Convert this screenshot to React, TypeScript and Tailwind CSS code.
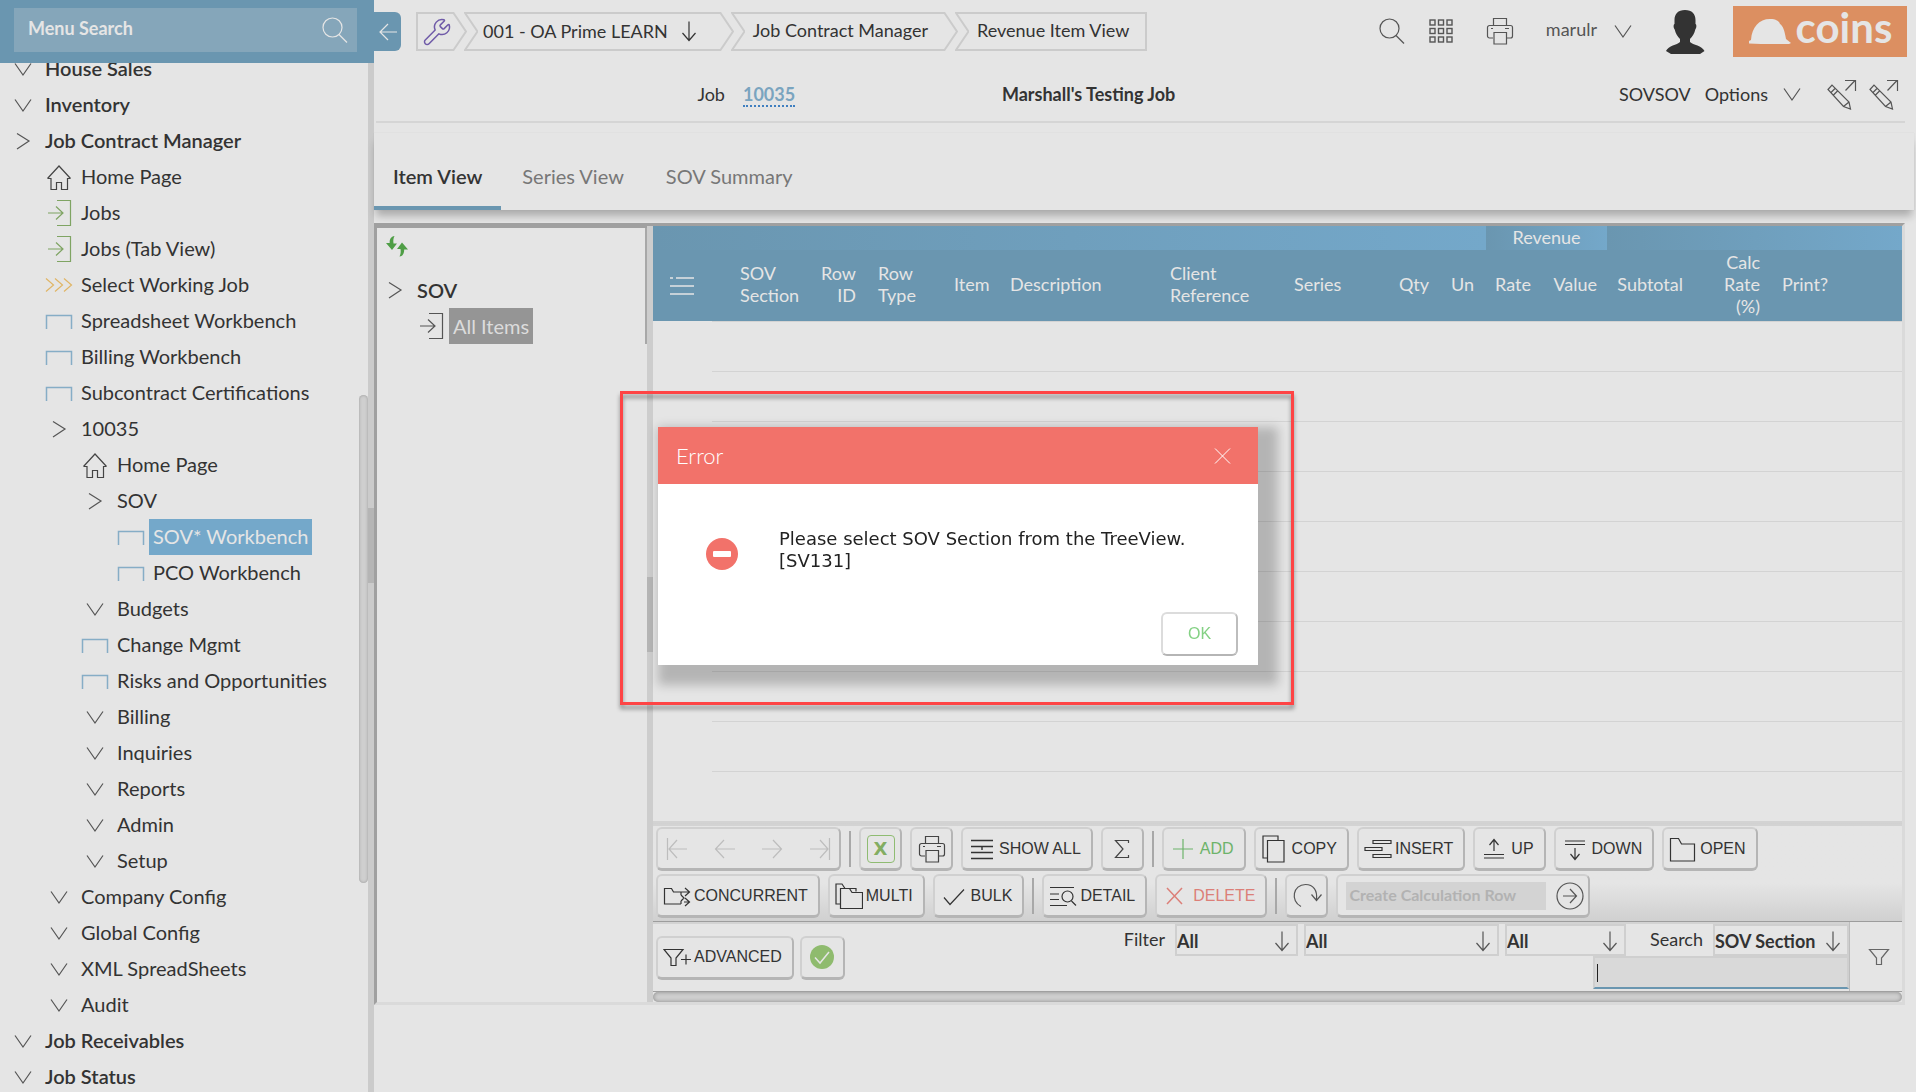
import type { ReactNode } from "react";
import { Wrench } from "lucide-react";

type IconProps = { children: ReactNode; size?: number; className?: string };

function Icon({ children, size = 28, className = "" }: IconProps) {
  return (
    <svg
      width={size}
      height={size}
      viewBox={`0 0 ${size} ${size}`}
      fill="none"
      stroke="currentColor"
      strokeWidth="1.2"
      aria-hidden="true"
      className={`shrink-0 ${className}`}
    >
      {children}
    </svg>
  );
}

const ChevronDown = () => <Icon><path d="M6 8.500l8 11.500 8-11.500" /></Icon>;
const ChevronRight = () => <Icon><path d="M8 6.500l12 7.500-12 8" /></Icon>;
const House = () => (
  <Icon>
    <path d="M2.500 15.500L14 3l11.500 12.500M2.500 15.500h3.500v11h5.500v-7h5v7h6v-11h3" />
  </Icon>
);
const Enter = () => (
  <Icon><path d="M12 1.500h13.500v25H12M3 14h14.500M11 7.500l7 6.500-7 6.500" /></Icon>
);
const TripleChevron = () => (
  <Icon><path d="M1 7.500l7.500 6.500L1 20.500M10 7.500l7.500 6.500-7.500 6.500M19 7.500l7.500 6.500-7.500 6.500" /></Icon>
);
const Frame = () => (
  <Icon><path d="M1.500 22V8.500h25V22" strokeWidth="1.5" /></Icon>
);
const ArrowDown = () => (
  <Icon size={22}><path d="M11 1.500v19M4.500 13l6.500 7.500 6.500-7.500" /></Icon>
);
const Magnifier = () => (
  <Icon><circle cx="11.500" cy="11.500" r="9.500" /><path d="M18 18.500l8 8" /></Icon>
);
const Printer = () => (
  <Icon>
    <path d="M7.500 8V1.500h13V8M7 21H3.500a2 2 0 0 1-2-2v-8.500a2 2 0 0 1 2-2h21a2 2 0 0 1 2 2V19a2 2 0 0 1-2 2H21M8 15.500h12.500v11.500H8zM5 11.500h2M19 11.500h4" />
  </Icon>
);
const EditPencil = () => (
  <Icon size={32}>
    <path d="M2 10.500l4-4.500 17 17 1.500 7-7-2.500zM5 13.500L9.500 9M7.500 16l4.500-4.500M17.500 27.500l5.500-4.500M19.500 11.500l9.500-10M19 1.500h10.500V12" />
  </Icon>
);
const Funnel = () => (
  <Icon><path d="M4.500 6.500h19L16.500 15v6.500h-5V15z" /></Icon>
);

const treeIcons = {
  open: { icon: <ChevronRight />, tone: "text-[#555]" },
  closed: { icon: <ChevronDown />, tone: "text-[#555]" },
  home: { icon: <House />, tone: "text-[#444]" },
  enter: { icon: <Enter />, tone: "text-[#7fa463]" },
  steps: { icon: <TripleChevron />, tone: "text-[#e0b565]" },
  frame: { icon: <Frame />, tone: "text-[#86adc6]" },
};

type TreeItem = [level: number, icon: keyof typeof treeIcons, label: string];

const menu: TreeItem[] = [
  [0, "closed", "House Sales"],
  [0, "closed", "Inventory"],
  [0, "open", "Job Contract Manager"],
  [1, "home", "Home Page"],
  [1, "enter", "Jobs"],
  [1, "enter", "Jobs (Tab View)"],
  [1, "steps", "Select Working Job"],
  [1, "frame", "Spreadsheet Workbench"],
  [1, "frame", "Billing Workbench"],
  [1, "frame", "Subcontract Certifications"],
  [1, "open", "10035"],
  [2, "home", "Home Page"],
  [2, "open", "SOV"],
  [3, "frame", "SOV* Workbench"],
  [3, "frame", "PCO Workbench"],
  [2, "closed", "Budgets"],
  [2, "frame", "Change Mgmt"],
  [2, "frame", "Risks and Opportunities"],
  [2, "closed", "Billing"],
  [2, "closed", "Inquiries"],
  [2, "closed", "Reports"],
  [2, "closed", "Admin"],
  [2, "closed", "Setup"],
  [1, "closed", "Company Config"],
  [1, "closed", "Global Config"],
  [1, "closed", "XML SpreadSheets"],
  [1, "closed", "Audit"],
  [0, "closed", "Job Receivables"],
  [0, "closed", "Job Status"],
];

const indents = ["pl-[5px]", "pl-[41px]", "pl-[77px]", "pl-[113px]"];

function Sidebar() {
  return (
    <aside className="flex h-full w-[374px] shrink-0 flex-col">
      <div className="h-[63px] shrink-0 bg-[#6a96b0] pt-2 pr-[17px] pl-3.5">
        <div className="flex h-11 items-center bg-[#85a6ba] pr-2 pl-3.5">
          <input
            type="text"
            aria-label="Menu Search"
            placeholder="Menu Search"
            className="h-9 min-w-0 flex-1 bg-transparent pb-1 text-lg font-bold text-[#e5e5e5] outline-none placeholder:text-[#e5e5e5]"
          />
          <span className="text-[#e5e5e5]"><Magnifier /></span>
        </div>
      </div>
      <div className="flex min-h-0 flex-1">
        <div className="relative min-w-0 flex-1 overflow-hidden">
          <nav className="-mt-3">
            <ul>
              {menu.map(([level, icon, label], i) => (
                <li key={i} className={indents[level]}>
                  <a href="#" className="flex h-9 items-center whitespace-nowrap">
                    <span className={`flex w-9 shrink-0 justify-center ${treeIcons[icon].tone}`}>
                      {treeIcons[icon].icon}
                    </span>
                    <span
                      className={`flex h-9 items-center pr-1 pb-0.5 pl-1 text-xl leading-6 ${
                        label === "SOV* Workbench" ? "bg-[#74a8ca] text-[#e5e5e5]" : ""
                      } ${level === 0 ? "font-semibold" : ""}`}
                    >
                      {label}
                    </span>
                  </a>
                </li>
              ))}
            </ul>
          </nav>
          <div className="absolute top-[332px] right-0 h-[488px] w-[9px] rounded-full bg-[#cfcfcf] shadow-[inset_0_0_3px_#999]" />
        </div>
        <div className="flex w-1.5 items-center bg-[#cbcbcb] pb-16">
          <div className="h-[75px] w-1.5 bg-[#b5b5b5]" />
        </div>
      </div>
    </aside>
  );
}

function CrumbTip() {
  return (
    <svg width="14" height="39" viewBox="0 0 14 39" fill="none" stroke="#cbcbcb" strokeWidth="2" aria-hidden="true" className="shrink-0">
      <path d="M0 1h0.500L13 19.500 0.500 38H0" />
    </svg>
  );
}

function CrumbNotch() {
  return (
    <svg width="14" height="39" viewBox="0 0 14 39" fill="none" stroke="#cbcbcb" strokeWidth="2" aria-hidden="true" className="-ml-[3px] shrink-0">
      <path d="M14 1H1l12.500 18.500L1 38h13" />
    </svg>
  );
}

function Breadcrumbs() {
  return (
    <nav aria-label="Breadcrumb" className="ml-[15px] flex h-[39px] shrink-0 text-lg whitespace-nowrap">
      <a href="#" aria-label="Tools" className="flex items-center border-y-2 border-l-2 border-[#cbcbcb] pr-px pl-1 text-[#6f5aa8]">
        <Wrench size={30} strokeWidth={1.2} />
      </a>
      <CrumbTip />
      <CrumbNotch />
      <button type="button" className="flex items-center gap-2.5 border-y-2 border-[#cbcbcb] pr-5 pb-0.5 pl-[5px]">
        001 - OA Prime LEARN <ArrowDown />
      </button>
      <CrumbTip />
      <CrumbNotch />
      <a href="#" className="flex items-center border-y-2 border-[#cbcbcb] pr-4 pb-1 pl-2">Job Contract Manager</a>
      <CrumbTip />
      <CrumbNotch />
      <a href="#" className="flex items-center border-y-2 border-r-2 border-[#cbcbcb] pr-4 pb-1 pl-2">Revenue Item View</a>
    </nav>
  );
}

function TopBar() {
  return (
    <header className="flex h-[63px] items-center">
      <button type="button" aria-label="Collapse menu" className="flex h-[39px] w-[27px] shrink-0 items-center justify-center rounded-r-md bg-[#6a96b0] text-[#e5e5e5]">
        <Icon size={22}><path d="M20 11H3M11 3l-8 8 8 8" /></Icon>
      </button>
      <Breadcrumbs />
      <div className="ml-auto flex shrink-0 items-center pr-[9px] text-[#555]">
        <div className="flex items-center pb-0.5">
          <button type="button" aria-label="Search"><Magnifier /></button>
          <button type="button" aria-label="Applications" className="ml-[21px]">
            <Icon>
              {[3, 11.500, 20].map((y) =>
                [3, 11.500, 20].map((x) => <rect key={`${x}-${y}`} x={x} y={y} width="5" height="5" strokeWidth="1.4" />)
              )}
            </Icon>
          </button>
          <button type="button" aria-label="Print" className="ml-[31px]"><Printer /></button>
          <button type="button" className="ml-8 flex items-center gap-3 text-lg">
            <span className="pb-1">marulr</span> <ChevronDown />
          </button>
        </div>
        <svg width="40" height="46" viewBox="0 0 40 46" fill="#333" aria-label="User" className="ml-7 shrink-0">
          <path d="M20 1c7 0 10.500 4 10.500 10v4c1.200.500 1.200 4-.200 5.500-.800 4-2.800 7-5.300 9.500v3c3 3 12 3.500 14.500 9L35 45H6L1 42c2.500-5.500 11-6 14-9v-3c-2.500-2.500-4.500-5.500-5.300-9.500-1.400-1.500-1.400-5-.200-5.500v-4C9.500 5 13 1 20 1z" />
        </svg>
        <div className="ml-7 flex h-[51px] w-[174px] items-center justify-center gap-1 bg-[#dc8f61] text-[#e5e5e5]">
          <svg width="44" height="27" viewBox="0 0 44 27" fill="currentColor" aria-hidden="true">
            <path d="M1 25.500V23l2-1C4 9 11 1 22 1c6 0 9 2 10 5 3 2 4.500 6 6 15l5 4-2 1H13z" />
          </svg>
          <span className="pb-2.5 text-[42px] leading-none font-bold">coins</span>
        </div>
      </div>
    </header>
  );
}

function JobBar() {
  return (
    <div className="mr-[11px] ml-0.5 border-b-2 border-[#d5d5d5]">
      <div className="grid h-[58px] grid-cols-[24%_259px_1fr_auto] items-center pt-1 text-lg">
        <span className="pr-[18px] text-right">Job</span>
        <span>
          <a href="#" className="border-b-2 border-dotted border-[#3f7fc0] font-bold text-[#7aa4bf]">10035</a>
        </span>
        <span className="font-bold">Marshall's Testing Job</span>
        <div className="flex items-center pr-[5px]">
          <span>SOVSOV</span>
          <button type="button" className="ml-3.5 flex items-center gap-2.5">
            Options <span className="text-[#555]"><ChevronDown /></span>
          </button>
          <button type="button" aria-label="Edit page" className="ml-5 pt-0.5 text-[#555]"><EditPencil /></button>
          <button type="button" aria-label="Edit layout" className="ml-2.5 pt-0.5 text-[#555]"><EditPencil /></button>
        </div>
      </div>
    </div>
  );
}

function Tabs() {
  return (
    <div role="tablist" className="mt-2.5 mr-0.5 flex h-[77px] text-xl text-[#777] shadow-[0_8px_8px_-2px_rgba(0,0,0,0.25),0_0_1px_rgba(0,0,0,0.1)]">
      <button type="button" role="tab" aria-selected="true" className="border-b-4 border-[#6a96b0] px-[19px] pt-3 font-semibold text-[#333]">
        Item View
      </button>
      <button type="button" role="tab" aria-selected="false" className="px-[21px] pt-2">Series View</button>
      <button type="button" role="tab" aria-selected="false" className="px-[21px] pt-2">SOV Summary</button>
    </div>
  );
}

function SectionTree() {
  return (
    <section className="w-[270px] shrink-0 border-t-2 border-[#a0a0a0]">
      <div className="h-[116px] border-r-2 border-[#a8a8a8]">
        <div className="h-11 pt-1.5 pl-2">
          <button type="button" aria-label="Refresh">
            <svg width="24" height="24" viewBox="0 0 24 24" fill="#4f9e46" aria-hidden="true">
              <path d="M9.500 2C6 2.500 4.500 5 4.700 9H1l6 7 5-6.500H8.500C8 6 8.500 4 9.500 2z" />
              <path d="M14.500 22.500c3.500-.500 4.700-3 4.700-7H23l-6-7-5 6.500h3.500c.500 3.500 0 5.500-1 7.500z" />
            </svg>
          </button>
        </div>
        <button type="button" className="flex h-9 items-center text-xl font-semibold">
          <span className="flex w-9 justify-center text-[#555]"><ChevronRight /></span>
          <span className="pl-1">SOV</span>
        </button>
        <a href="#" className="flex h-9 items-center pl-9 text-xl">
          <span className="flex w-9 justify-center text-[#555]"><Enter /></span>
          <span className="flex h-9 items-center bg-[#959595] px-1 text-[#dcdcdc]">All Items</span>
        </a>
      </div>
    </section>
  );
}

const columns = [
  { label: "SOV Section", col: "w-24", cell: "pl-7" },
  { label: "Row ID", col: "w-[60px]", cell: "pr-3 pl-3 text-right" },
  { label: "Row Type", col: "w-[76px]", cell: "pr-2.5 pl-2.5" },
  { label: "Item", col: "w-14", cell: "pl-2.5" },
  { label: "Description", col: "w-40", cell: "pl-2.5" },
  { label: "Client Reference", col: "w-[124px]", cell: "pr-2.5 pl-2.5" },
  { label: "Series", col: "w-[107px]", cell: "pl-2.5" },
  { label: "Qty", col: "w-[50px]", cell: "pr-3 text-right" },
  { label: "Un", col: "w-[45px]", cell: "pl-2.5" },
  { label: "Rate", col: "w-[55px]", cell: "pr-2.5 text-right" },
  { label: "Value", col: "w-[66px]", cell: "pr-2.5 text-right" },
  { label: "Subtotal", col: "w-[86px]", cell: "pr-2.5 text-right" },
  { label: "Calc Rate (%)", col: "w-[77px]", cell: "pr-2.5 pl-2.5 text-right" },
  { label: "Print?", col: "", cell: "pl-3" },
];

function ItemGrid() {
  const band = "h-6 bg-linear-to-r from-[#6a96b0] to-[#74a8ca] pb-0.5 font-normal";
  return (
    <table className="w-full table-fixed border-separate border-spacing-0 text-lg leading-[22px]">
      <colgroup>
        <col className="w-[59px]" />
        {columns.map((c) => <col key={c.label} className={c.col} />)}
      </colgroup>
      <thead className="text-[#e5e5e5]">
        <tr>
          <th colSpan={10} className={band} />
          <th colSpan={2} className={band}>Revenue</th>
          <th colSpan={3} className={band} />
        </tr>
        <tr className="bg-[#6a96b0]">
          <th className="h-[71px] pl-4">
            <button type="button" aria-label="Choose columns" className="block">
              <Icon><path d="M1 6h3M7 6h18M1 14h24M1 22h24" strokeWidth="1.5" /></Icon>
            </button>
          </th>
          {columns.map((c) => (
            <th key={c.label} scope="col" className={`pb-1 text-left align-middle font-normal ${c.cell}`}>{c.label}</th>
          ))}
        </tr>
      </thead>
      <tbody>
        {Array.from({ length: 10 }, (_, i) => (
          <tr key={i}>
            <td className="h-[50px]" />
            <td colSpan={14} className="border-t border-[#d3d3d3]" />
          </tr>
        ))}
      </tbody>
    </table>
  );
}

const raised =
  "flex h-11 shrink-0 items-center rounded-md border-2 border-[#d0d0d0] border-r-[#b5b5b5] border-b-[3px] border-b-[#b5b5b5] bg-[#e5e5e5]";

function ToolButton({ icon, label, tone = "text-[#333]" }: { icon: ReactNode; label: string; tone?: string }) {
  return (
    <button type="button" className={`${raised} gap-[3px] pr-2.5 pl-[5px] font-['Liberation_Sans',sans-serif] text-base whitespace-nowrap ${tone}`}>
      {icon}
      {label}
    </button>
  );
}

function IconButton({ icon, label }: { icon: ReactNode; label: string }) {
  return (
    <button type="button" aria-label={label} className={`${raised} w-[43px] justify-center text-[#444]`}>
      {icon}
    </button>
  );
}

const Divider = () => <span className="h-9 w-0.5 bg-[#a8a8a8]" />;

function Toolbar() {
  return (
    <div className="flex flex-col gap-[3px] border-t-[5px] border-b border-t-[#d3d3d3] border-b-[#9d9d9d] bg-linear-to-b from-[#e5e5e5] from-60% to-[#d0d0d0] pt-px pb-[3px] pl-[3px] [border-top-style:double]">
      <div className="flex items-center gap-2">
        <div className={`${raised} w-[185px] justify-between px-2 text-[#bdbdbd]`}>
          <button type="button" aria-label="First"><Icon size={22}><path d="M1.500 0v22M21 11H3M11 2l-8 9 8 9" /></Icon></button>
          <button type="button" aria-label="Previous"><Icon size={22}><path d="M21 11H1M10 2l-8.500 9 8.500 9" /></Icon></button>
          <button type="button" aria-label="Next"><Icon size={22}><path d="M1 11h20M12 2l8.500 9-8.500 9" /></Icon></button>
          <button type="button" aria-label="Last"><Icon size={22}><path d="M20.500 0v22M1 11h18M11 2l8 9-8 9" /></Icon></button>
        </div>
        <Divider />
        <IconButton
          label="Export to Excel"
          icon={
            <span className="flex size-7 items-center justify-center rounded-sm border border-[#8fbc72] font-['DejaVu_Sans',sans-serif] text-lg leading-none font-bold text-[#83ad62]">X</span>
          }
        />
        <IconButton label="Print" icon={<Printer />} />
        <ToolButton label="SHOW ALL" icon={<Icon><path d="M3 5.500h22M3 11.500h22M3 17.500h22M3 23.500h22M14 11v4" strokeWidth="1.4" /></Icon>} />
        <IconButton label="Totals" icon={<Icon size={22}><path d="M17.500 5V2.500h-13l7.500 8.500-7.500 8.500h13V17" /></Icon>} />
        <Divider />
        <ToolButton label="ADD" tone="text-[#6db36a]" icon={<Icon><path d="M14 4v20M4 14h20" /></Icon>} />
        <ToolButton label="COPY" icon={<Icon><path d="M6.500 23H2V1h15v4M6.500 5.500H23V27H6.500z" /></Icon>} />
        <ToolButton label="INSERT" icon={<Icon><path d="M9 5.500h18v3H9zM1 12.500h17v3H1zM9 19.500h18v3H9z" /></Icon>} />
        <ToolButton label="UP" icon={<Icon><path d="M14 16V5M9.500 10L14 4.500l4.500 5.500M4 19.500h20M4 23h20" /></Icon>} />
        <ToolButton label="DOWN" icon={<Icon><path d="M14 13v11M9.500 19l4.500 5.500 4.500-5.500M4 6h20M4 9.500h20" /></Icon>} />
        <ToolButton label="OPEN" icon={<Icon><path d="M1.500 26V3.500h8l3 5.500h13V26z" /></Icon>} />
      </div>
      <div className="flex items-center gap-2">
        <ToolButton label="CONCURRENT" icon={<Icon><path d="M18 22H1.500V6.500h7l2 3.500H18v3M18 19v3M18 10h8M22 6l4.500 4-4.500 4M21 20h5.500M22 16l4.500 4-4.500 4M18 13l3 3-3 3" /></Icon>} />
        <ToolButton label="MULTI" icon={<Icon><path d="M5 22H1V2h6l3 4.500h11v3M5.500 6.500v20h22v-16H17L14.500 6.500z" /></Icon>} />
        <ToolButton label="BULK" icon={<Icon><path d="M4 15.500l6 7L24 7.500" /></Icon>} />
        <Divider />
        <ToolButton label="DETAIL" icon={<Icon><path d="M1 5.500h24M1 12h9M1 17.500h9M1 23.500h17M22.500 19l4.500 4.500" /><circle cx="18.500" cy="14.500" r="5.500" /></Icon>} />
        <ToolButton label="DELETE" tone="text-[#dc7f78]" icon={<Icon><path d="M5 6l15 16M20 6L5 22" strokeWidth="1.5" /></Icon>} />
        <Divider />
        <button type="button" aria-label="Recalculate" className={`${raised} w-[43px] justify-center text-[#555]`}>
          <Icon size={32}><path d="M10 26.500C-1 21 2 4.500 14.500 4.500c8 0 12 6 11 15M20.500 14.500l5 6 5-6" /></Icon>
        </button>
        <form className={`${raised} pr-1 pl-2`}>
          <input
            type="text"
            aria-label="Create Calculation Row"
            placeholder="Create Calculation Row"
            className="h-7 w-[200px] bg-[#d3d3d3] px-[3px] pb-0.5 text-base font-bold outline-none placeholder:text-[#b2b2b2]"
          />
          <button type="button" aria-label="Create" className="ml-2.5 text-[#555]">
            <Icon><circle cx="14" cy="14" r="13" /><path d="M7 14h13M14 7l6.500 7-6.500 7" /></Icon>
          </button>
        </form>
      </div>
    </div>
  );
}

function Select({ label, value, width }: { label: string; value: string; width: string }) {
  return (
    <span className={`relative block h-8 border-2 border-[#cfcfcf] ${width}`}>
      <select aria-label={label} className="h-full w-full appearance-none bg-transparent pb-1 text-lg leading-6 font-bold outline-none">
        <option>{value}</option>
      </select>
      <span className="pointer-events-none absolute top-1 right-[3px] text-[#555]"><ArrowDown /></span>
    </span>
  );
}

function FilterBar() {
  return (
    <div className="flex h-[70px] border-b border-[#a0a0a0]">
      <div className="flex flex-1 items-center gap-1.5 border-t-2 border-[#d3d3d3] pl-[3px]">
        <ToolButton label="ADVANCED" icon={<Icon><path d="M1 6.500h19L13 15v7.500H8V15zM18 16.500h10M23 11.500v10" /></Icon>} />
        <button type="button" aria-label="Apply" className={`${raised} w-[45px] justify-center`}>
          <Icon><circle cx="14" cy="14" r="12" fill="#8fbb6e" stroke="none" /><path d="M7 14.500l5 5.500 9-11" stroke="#e5e5e5" strokeWidth="1.5" /></Icon>
        </button>
      </div>
      <div className="flex flex-col items-end border-t-2 border-[#d3d3d3]">
        <div className="flex items-start gap-1.5 text-lg leading-[30px]">
          <span className="pr-1">Filter</span>
          <Select label="Section filter" value="All" width="w-[123px]" />
          <Select label="Type filter" value="All" width="w-[195px]" />
          <Select label="Status filter" value="All" width="w-[121px]" />
          <span className="pr-1 pl-[18px]">Search</span>
          <Select label="Search field" value="SOV Section" width="w-[136px]" />
        </div>
        <div className="relative">
          <input
            type="text"
            aria-label="Search text"
            className="block h-[33px] w-64 border-2 border-[#cfcfcf] border-b-[#6a96b0] bg-[#d9d9d9] px-1 text-lg outline-none"
          />
          <span className="absolute top-2 left-1 h-[18px] w-px bg-[#222]" />
        </div>
      </div>
      <button type="button" aria-label="Filter" className="flex w-[53px] items-center justify-center border-l border-[#bdbdbd] pl-1.5 text-[#666]">
        <Funnel />
      </button>
    </div>
  );
}

function ErrorDialog() {
  return (
    <div className="fixed inset-0 flex items-center justify-center">
      <div className="relative">
        <div role="alertdialog" aria-labelledby="error-title" className="w-[600px] bg-white shadow-[10px_10px_10px_10px_rgba(0,0,0,0.21)]">
          <div className="flex h-[57px] items-center justify-between bg-[#f2726a] pr-5 pl-[18px] text-white">
            <h2 id="error-title" className="text-[22px] leading-7 font-light">Error</h2>
            <button type="button" aria-label="Close">
              <Icon size={30}><path d="M7 7.500l15 15M22 7.500l-15 15" strokeWidth="1" /></Icon>
            </button>
          </div>
          <div className="flex px-12 pt-11 font-['DejaVu_Sans',sans-serif] text-lg leading-[22px] text-[#222]">
            <svg width="32" height="32" viewBox="0 0 32 32" aria-hidden="true" className="mt-2.5 shrink-0">
              <circle cx="16" cy="16" r="16" fill="#f2726a" />
              <rect x="7" y="13" width="18" height="6" rx="1" fill="#fff" />
            </svg>
            <p className="ml-[41px]">
              Please select SOV Section from the TreeView.
              <br />
              [SV131]
            </p>
          </div>
          <div className="flex justify-end pt-10 pr-5 pb-[9px]">
            <button type="button" className="h-11 w-[77px] rounded-md border-2 border-[#dcdcdc] border-r-[#bdbdbd] border-b-[#b5b5b5] bg-white font-['Liberation_Sans',sans-serif] text-base text-[#84d184]">
              OK
            </button>
          </div>
        </div>
        <div className="pointer-events-none absolute -top-9 -right-9 -bottom-10 -left-[38px] border-3 border-[#fe4445] drop-shadow-[0_4px_2px_rgba(0,0,0,0.4)]" />
      </div>
    </div>
  );
}

export default function App() {
  return (
    <div className="flex h-screen overflow-hidden bg-[#e5e5e5] font-[Lato,sans-serif] text-[#333]">
      <Sidebar />
      <main className="min-w-0 flex-1">
        <TopBar />
        <JobBar />
        <Tabs />
        <div className="mt-[13px] mr-[11px] flex border-3 border-[#a0a0a0] border-r-[#dadada] border-b-[#dadada]">
          <SectionTree />
          <div className="flex w-1.5 shrink-0 items-center bg-[#cdcdcd]">
            <div className="h-[75px] w-1.5 bg-[#b5b5b5]" />
          </div>
          <div className="min-w-0 flex-1">
            <ItemGrid />
            <Toolbar />
            <FilterBar />
            <div className="h-2.5 rounded-full bg-[#cfcfcf] shadow-[inset_0_0_4px_#888]" />
          </div>
        </div>
      </main>
      <ErrorDialog />
    </div>
  );
}
